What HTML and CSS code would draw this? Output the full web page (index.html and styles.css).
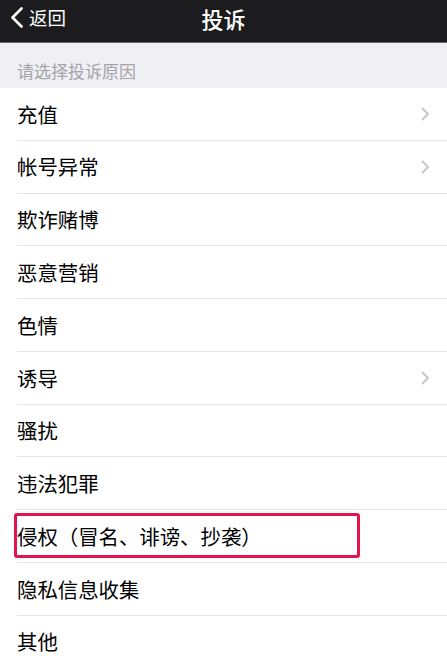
FILE: index.html
```html
<!DOCTYPE html>
<html lang="zh-CN">
<head>
<meta charset="utf-8">
<title>投诉</title>
<link rel="stylesheet" href="styles.css">
</head>
<body>
<header class="navbar">
  <div class="nav-left">
    <svg class="back-icon" width="14" height="21" viewBox="0 0 14 21"><path d="M11.5 1.5 L2.5 10.5 L11.5 19.5" fill="none" stroke="#fff" stroke-width="2.6" stroke-linecap="round" stroke-linejoin="round"/></svg>
    <span class="back-text">返回</span>
  </div>
  <div class="nav-title">投诉</div>
  <div class="nav-right"></div>
</header>
<div class="section-title">请选择投诉原因</div>
<ul class="list">
  <li class="row"><span class="label">充值</span><svg class="chev" width="9" height="14" viewBox="0 0 9 14"><path d="M1.5 1.5 L7 7 L1.5 12.5" fill="none" stroke="#c7c7cc" stroke-width="2" stroke-linecap="round" stroke-linejoin="round"/></svg></li>
  <li class="row"><span class="label">帐号异常</span><svg class="chev" width="9" height="14" viewBox="0 0 9 14"><path d="M1.5 1.5 L7 7 L1.5 12.5" fill="none" stroke="#c7c7cc" stroke-width="2" stroke-linecap="round" stroke-linejoin="round"/></svg></li>
  <li class="row"><span class="label">欺诈赌博</span></li>
  <li class="row"><span class="label">恶意营销</span></li>
  <li class="row"><span class="label">色情</span></li>
  <li class="row"><span class="label">诱导</span><svg class="chev" width="9" height="14" viewBox="0 0 9 14"><path d="M1.5 1.5 L7 7 L1.5 12.5" fill="none" stroke="#c7c7cc" stroke-width="2" stroke-linecap="round" stroke-linejoin="round"/></svg></li>
  <li class="row"><span class="label">骚扰</span></li>
  <li class="row"><span class="label">违法犯罪</span></li>
  <li class="row row-marked"><span class="label">侵权（冒名、诽谤、抄袭）</span><span class="highlight"></span></li>
  <li class="row"><span class="label">隐私信息收集</span></li>
  <li class="row"><span class="label">其他</span></li>
</ul>
</body>
</html>
```
FILE: styles.css
```css
html, body {
  margin: 0;
  padding: 0;
  background: #ffffff;
  font-family: "Noto Sans CJK SC", "Noto Sans", sans-serif;
  overflow: hidden;
}

.navbar {
  height: 43px;
  box-sizing: border-box;
  background: #1c1c1e;
  border-bottom: 1px solid #6a6a6e;
  display: grid;
  grid-template-columns: 1fr auto 1fr;
  align-items: center;
  padding-bottom: 7px;
  color: #ffffff;
}

.nav-left {
  display: flex;
  align-items: center;
  padding-left: 10px;
  gap: 5px;
}

.back-icon {
  display: block;
}

.back-text {
  font-size: 18.5px;
  line-height: 1;
}

.nav-title {
  font-size: 22px;
  line-height: 1;
  font-weight: 500;
}

.section-title {
  height: 45px;
  box-sizing: border-box;
  background: #efeff4;
  color: #a4a4a9;
  font-size: 17px;
  line-height: 1;
  padding: 10px 0 0 17px;
  display: flex;
  align-items: center;
}

.list {
  list-style: none;
  margin: 0;
  padding: 0;
}

.row {
  position: relative;
  height: 52.78px;
  box-sizing: border-box;
  margin-left: 17px;
  padding-right: 17px;
  border-bottom: 1px solid #e4e4e8;
  display: flex;
  align-items: center;
  justify-content: space-between;
}

.label {
  font-size: 20.4px;
  line-height: 1;
  color: #000000;
}

.chev {
  display: block;
}

.highlight {
  position: absolute;
  left: -3px;
  top: 3px;
  width: 346px;
  height: 45px;
  box-sizing: border-box;
  border: 3px solid #e3134e;
  border-radius: 3px;
  pointer-events: none;
}
```
